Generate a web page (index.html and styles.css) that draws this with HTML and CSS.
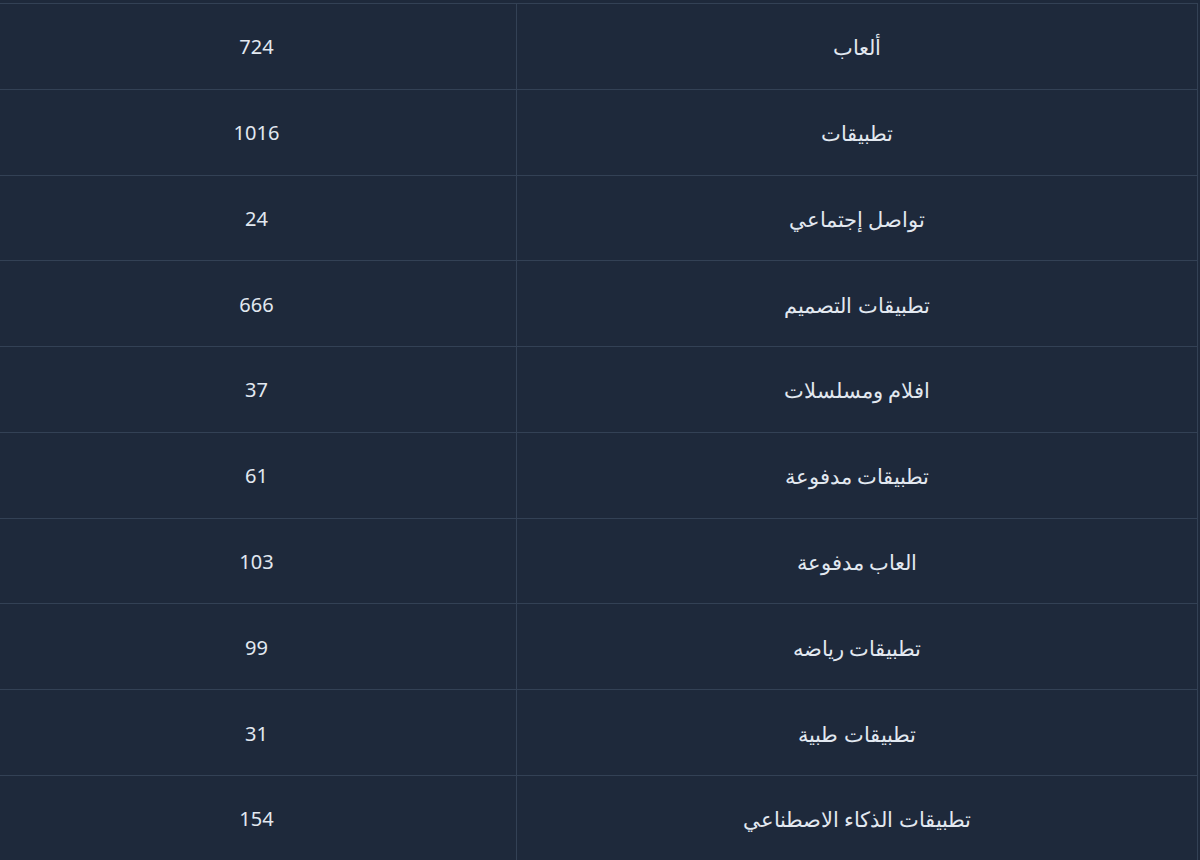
FILE: index.html
```html
<!DOCTYPE html>
<html lang="ar" dir="rtl">
<head>
<meta charset="utf-8">
<link rel="stylesheet" href="styles.css">
</head>
<body>
<div class="wrap">
<table class="stats">
<tbody>
<tr><td class="name">ألعاب</td><td class="num">724</td></tr>
<tr><td class="name">تطبيقات</td><td class="num">1016</td></tr>
<tr><td class="name">تواصل إجتماعي</td><td class="num">24</td></tr>
<tr><td class="name">تطبيقات التصميم</td><td class="num">666</td></tr>
<tr><td class="name">افلام ومسلسلات</td><td class="num">37</td></tr>
<tr><td class="name">تطبيقات مدفوعة</td><td class="num">61</td></tr>
<tr><td class="name">العاب مدفوعة</td><td class="num">103</td></tr>
<tr><td class="name">تطبيقات رياضه</td><td class="num">99</td></tr>
<tr><td class="name">تطبيقات طبية</td><td class="num">31</td></tr>
<tr><td class="name">تطبيقات الذكاء الاصطناعي</td><td class="num">154</td></tr>
</tbody>
</table>
</div>
</body>
</html>
```

FILE: styles.css
```css
html, body {
  margin: 0;
  padding: 0;
  background: #1e293b;
  overflow: hidden;
}
body {
  font-family: "Noto Sans", "Open Sans", sans-serif;
  color: #e2e8f0;
}
.wrap {
  padding-top: 3px;
  padding-right: 2px;
}
.stats {
  width: 1202px;
  border-collapse: collapse;
  table-layout: fixed;
}
.stats td {
  border: 1px solid #334155;
  height: 82.78px;
  padding: 2px 0 0;
  text-align: center;
  vertical-align: middle;
  font-size: 20px;
  line-height: 28px;
}
.stats td.name {
  width: 680px;
  font-size: 21px;
}
```
